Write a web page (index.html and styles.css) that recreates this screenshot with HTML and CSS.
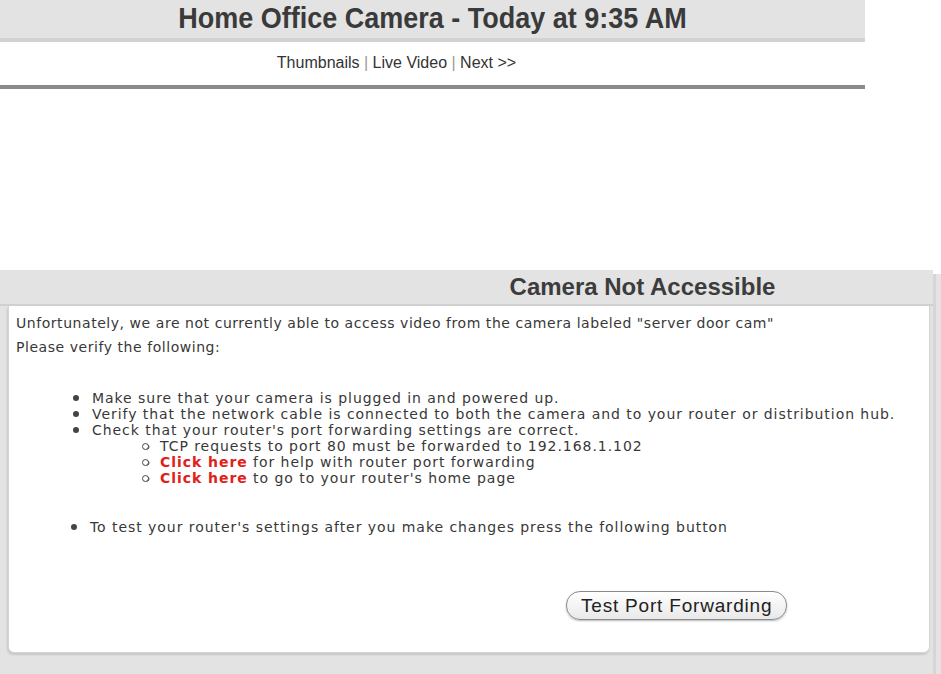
FILE: index.html
```html
<!DOCTYPE html>
<html>
  <head>
    <title>Home Office Camera</title>
    <link rel="stylesheet" href="styles.css">
  </head>
  <body>
    <div class="viewer">
      <h1 class="viewer-title"><span>Home Office Camera - Today at 9:35 AM</span></h1>
      <div class="viewer-nav">
        <a href="#">Thumbnails</a> <span class="sep">|</span>
        <a href="#">Live Video</a> <span class="sep">|</span>
        <a href="#">Next &gt;&gt;</a>
      </div>
    </div>

    <div class="status">
      <div class="panel">
        <h2 class="panel-title">Camera Not Accessible</h2>
        <div class="panel-box">
          <p>Unfortunately, we are not currently able to access video from the camera labeled "server door cam"</p>
          <p>Please verify the following:</p>
          <ul class="checks">
            <li>Make sure that your camera is plugged in and powered up.</li>
            <li>Verify that the network cable is connected to both the camera and to your router or distribution hub.</li>
            <li>Check that your router's port forwarding settings are correct.
              <ul class="sub">
                <li>TCP requests to port 80 must be forwarded to 192.168.1.102</li>
                <li><a class="red" href="#">Click here</a> for help with router port forwarding</li>
                <li><a class="red" href="#">Click here</a> to go to your router's home page</li>
              </ul>
            </li>
          </ul>
          <ul class="checks last">
            <li>To test your router's settings after you make changes press the following button</li>
          </ul>
          <div class="actions">
            <button class="test-btn">Test Port Forwarding</button>
          </div>
        </div>
      </div>
      <div class="edge"></div>
    </div>
  </body>
</html>
```

FILE: styles.css
```css
body {
  margin: 0;
  background: #fff;
  font-family: "Liberation Sans", Arial, sans-serif;
  color: #333;
}

/* camera viewer header */
.viewer {
  width: 865px;
}
.viewer-title {
  margin: 0;
  height: 38px;
  line-height: 36px;
  background: #e3e3e3;
  border-bottom: 4px solid #d2d2d2;
  text-align: center;
  font-size: 27px;
  font-weight: bold;
  color: #3a3a3a;
}
.viewer-title span {
  display: inline-block;
  transform: scaleY(1.12);
}
.viewer-nav {
  height: 43px;
  line-height: 42px;
  padding-right: 72px;
  text-align: center;
  font-size: 16px;
  border-bottom: 4px solid #8a8a8a;
  background: #fff;
}
.viewer-nav a {
  color: #333;
  text-decoration: none;
}
.viewer-nav .sep {
  color: #999;
}

/* error panel */
.status {
  display: flex;
  margin-top: 181px;
}
.panel {
  width: 933px;
  height: 404px;
  background: #e3e3e3;
}
.edge {
  width: 8px;
  margin-top: 4px;
  background: linear-gradient(to right, #d6d6d6 0, #d6d6d6 3px, #e4e4e4 3px);
}
.panel-title {
  margin: 0;
  height: 34px;
  line-height: 34px;
  padding-left: 352px;
  text-align: center;
  font-size: 24px;
  font-weight: bold;
  color: #3c3c3c;
  border-bottom: 2px solid #d0d0d0;
}
.panel-box {
  margin: 0 3px 0 8px;
  height: 347px;
  box-sizing: border-box;
  background: #fff;
  border: 1px solid #d4d4d4;
  border-top: none;
  border-radius: 0 0 6px 6px;
  box-shadow: -1px 2px 2px #c8c8c8;
  padding: 9px 0 0 7px;
  font-family: "DejaVu Sans", Verdana, sans-serif;
  font-size: 14px;
  letter-spacing: 0.55px;
  color: #383838;
}
.panel-box p {
  margin: 0 0 8px;
  line-height: 16px;
}
.checks {
  margin: 35px 0 0;
  padding-left: 76px;
  list-style: none;
  line-height: 16px;
  letter-spacing: 0.95px;
}
.checks li::before {
  content: "";
  display: inline-block;
  box-sizing: border-box;
  width: 6px;
  height: 6px;
  margin: 0 13px 2px -19px;
  border-radius: 50%;
  background: #444;
  vertical-align: middle;
}
.sub {
  margin: 0;
  padding-left: 68px;
}
.sub li::before {
  width: 7px;
  height: 7px;
  margin: 0 11px 2px -18px;
  border: 1.5px solid #444;
  background: #fff;
}
.red {
  color: #e0201a;
  font-weight: bold;
  text-decoration: none;
}
.checks.last {
  margin-top: 33px;
  padding-left: 74px;
}
.actions {
  margin-top: 56px;
  padding-left: 550px;
}
.test-btn {
  height: 29px;
  padding: 0 14px;
  border: 1px solid #8a8a8a;
  border-radius: 14px;
  background: linear-gradient(#ffffff, #e9e9e9);
  box-shadow: 0 1px 2px #b8b8b8;
  font-family: "Liberation Sans", Arial, sans-serif;
  font-size: 19px;
  letter-spacing: 0.8px;
  color: #222;
}
```
